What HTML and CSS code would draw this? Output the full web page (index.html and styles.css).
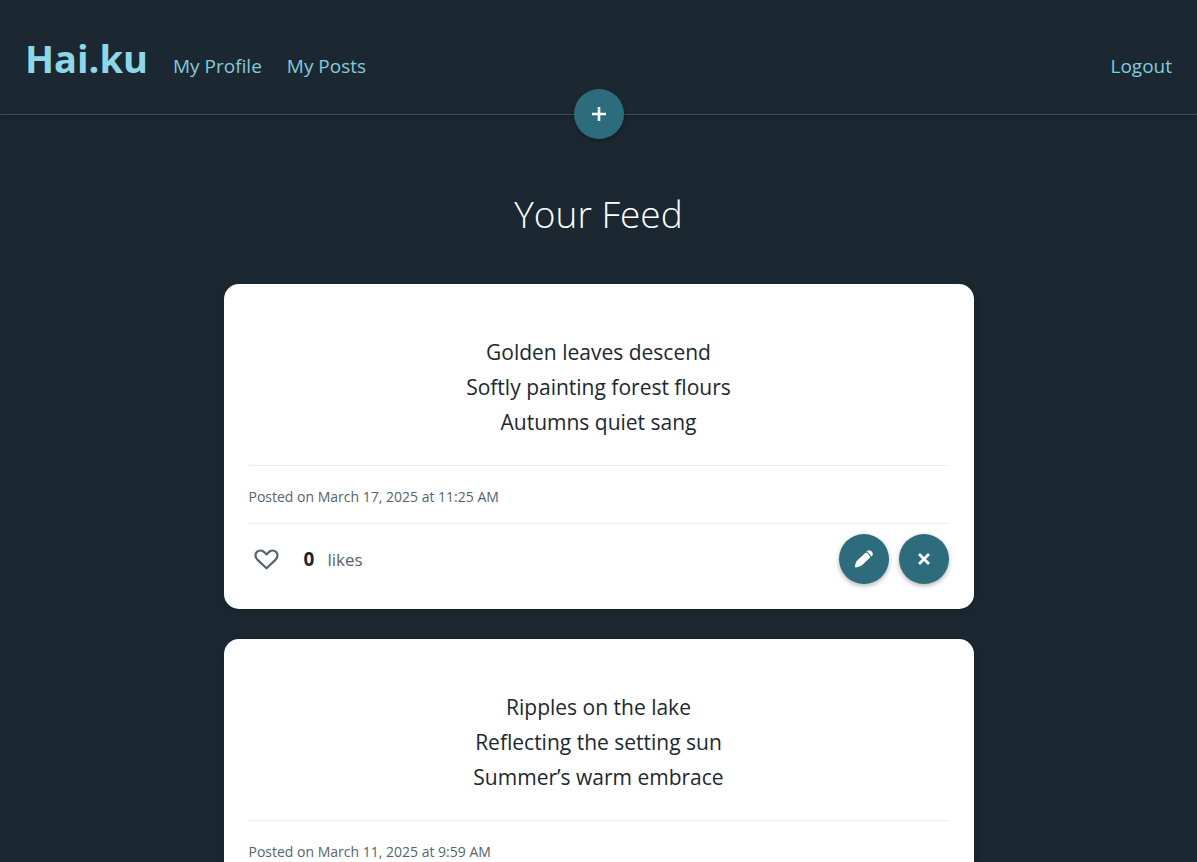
FILE: index.html
```html
<!DOCTYPE html>
<html lang="en">
<head>
<meta charset="utf-8">
<meta name="viewport" content="width=device-width, initial-scale=1">
<title>Hai.ku</title>
<link rel="stylesheet" href="styles.css">
</head>
<body>
<header class="header">
  <nav class="nav">
    <a class="brand" href="#">Hai.ku</a>
    <a class="nav-link" href="#">My Profile</a>
    <a class="nav-link" href="#">My Posts</a>
    <a class="nav-link logout" href="#">Logout</a>
  </nav>
  <button class="round-button add-button" type="button" aria-label="New post">
    <svg width="16" height="16" viewBox="0 0 16 16" aria-hidden="true"><path d="M8 1v14M1 8h14" fill="none" stroke="currentColor" stroke-width="2.6"/></svg>
  </button>
</header>
<main class="feed">
  <h1 class="title">Your Feed</h1>
  <article class="card">
    <p class="poem">Golden leaves descend<br>Softly painting forest flours<br>Autumns quiet sang</p>
    <p class="posted">Posted on March 17, 2025 at 11:25 AM</p>
    <div class="actions">
      <button class="like" type="button" aria-label="Like">
        <svg width="25" height="21" viewBox="0 0 26 22" aria-hidden="true"><path d="M13 20.2 3.4 11.1C.9 8.400.9 4.900 3 3c2.300-2 5.700-1.700 7.800.5L13 5.700l2.200-2.200c2.100-2.200 5.500-2.500 7.800-.5 2.100 1.900 2.100 5.400-.4 8.100Z" fill="none" stroke="currentColor" stroke-width="2.300" stroke-linejoin="round"/></svg>
      </button>
      <p class="likes"><strong class="count">0</strong>likes</p>
      <div class="tools">
        <button class="round-button" type="button" aria-label="Edit post">
          <svg width="18" height="18" viewBox="0 0 18 18" aria-hidden="true"><path d="M10.800 2.500 2.400 10.300C.9 11.700.3 14.300 0 16.300c-.1.800.2 1.200 1 1.100 2.400-.3 4.900-1 6.300-2.300l8-7.800C14.500 5.200 12.900 3.200 10.800 2.500Z" fill="currentColor"/><path d="m11.600 1.700.7-.7c2.600-2.400 7.300 2.200 4.900 4.700l-1 .9C15.300 4.500 13.700 2.600 11.600 1.700Z" fill="currentColor"/></svg>
        </button>
        <button class="round-button" type="button" aria-label="Delete post">
          <svg width="12" height="12" viewBox="0 0 12 12" aria-hidden="true"><path d="m1 1 10 10M11 1 1 11" fill="none" stroke="currentColor" stroke-width="2.800"/></svg>
        </button>
      </div>
    </div>
  </article>
  <article class="card">
    <p class="poem">Ripples on the lake<br>Reflecting the setting sun<br>Summer’s warm embrace</p>
    <p class="posted">Posted on March 11, 2025 at 9:59 AM</p>
  </article>
</main>
</body>
</html>
```
FILE: styles.css
```css
* {
  box-sizing: border-box;
}

body {
  display: flex;
  flex-direction: column;
  height: 100vh;
  margin: 0;
  overflow: hidden;
  background: #1c2831;
  color: #1c2831;
  font-family: "Segoe UI", "Open Sans", "Noto Sans", sans-serif;
}

p,
h1 {
  margin: 0;
}

a {
  color: #8dd8e8;
  text-decoration: none;
}

.header {
  position: relative;
  flex: none;
  padding: 30px 25px 28px;
  border-bottom: 1px solid #3e4c54;
  box-shadow: 0 2px 5px rgba(0, 0, 0, 0.2);
}

.nav {
  display: flex;
  align-items: baseline;
  gap: 25px;
}

.brand {
  font-size: 38px;
  font-weight: 700;
  line-height: 56px;
}

.nav-link {
  color: #82cbdb;
  font-size: 19px;
}

.logout {
  margin-left: auto;
}

.round-button {
  display: flex;
  align-items: center;
  justify-content: center;
  width: 50px;
  height: 50px;
  padding: 0;
  border: 0;
  border-radius: 50%;
  background: #2c6c7c;
  box-shadow: 0 2px 5px rgba(0, 0, 0, 0.3);
  color: #fff;
  cursor: pointer;
}

.add-button {
  position: absolute;
  bottom: 0;
  left: 50%;
  transform: translate(-50%, 50%);
}

.feed {
  display: flex;
  flex-direction: column;
  gap: 30px;
  width: 100%;
  max-width: 750px;
  margin: 0 auto;
  padding-top: 70px;
}

.title {
  margin-bottom: 12px;
  color: #fff;
  font-size: 37px;
  font-weight: 300;
  line-height: 57px;
  text-align: center;
}

.card {
  padding: 25px;
  border-radius: 15px;
  background: #fff;
  box-shadow: 0 2px 8px rgba(0, 0, 0, 0.2);
}

.poem {
  padding: 26px 0 25px;
  font-size: 21px;
  line-height: 35px;
  text-align: center;
}

.posted {
  padding: 20px 0 16px;
  border-top: 1px solid #ebedee;
  color: #55636d;
  font-size: 14px;
  line-height: 21px;
}

.actions {
  display: flex;
  align-items: center;
  padding-top: 10px;
  border-top: 1px solid #ebedee;
}

.like {
  display: flex;
  padding: 5px;
  border: 0;
  background: none;
  color: #55636d;
  cursor: pointer;
}

.likes {
  display: flex;
  align-items: baseline;
  gap: 13px;
  margin-left: 20px;
  color: #55636d;
  font-size: 17px;
}

.count {
  color: #1c2831;
  font-size: 19px;
}

.tools {
  display: flex;
  gap: 10px;
  margin-left: auto;
}
```
